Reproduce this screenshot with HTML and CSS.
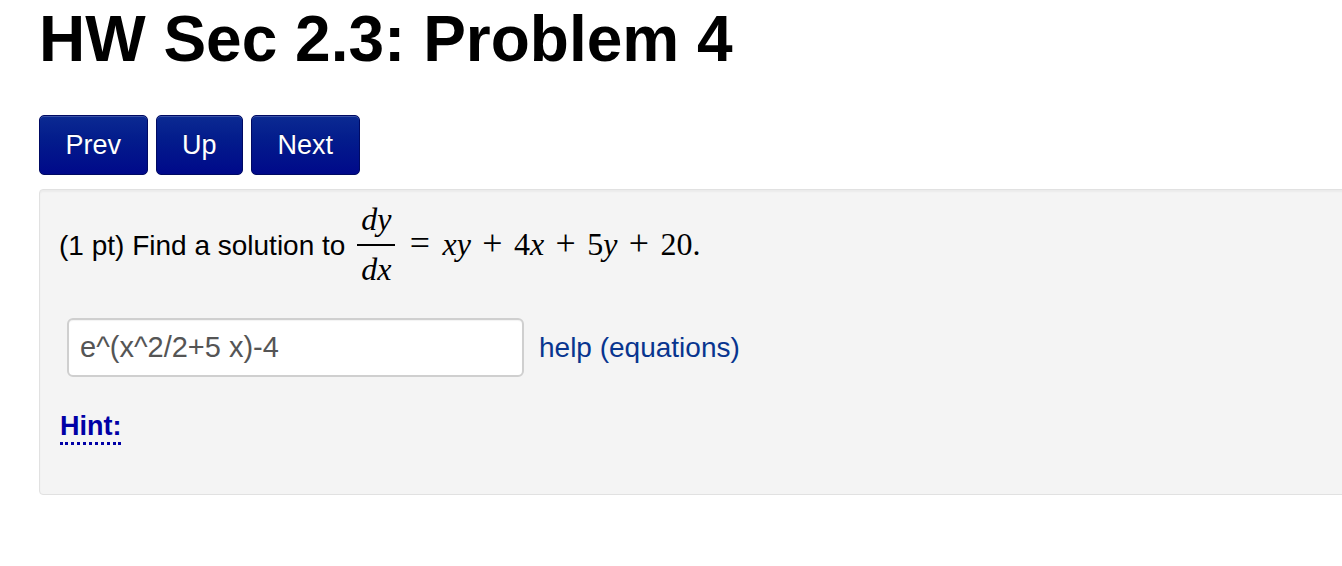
FILE: index.html
```html
<!DOCTYPE html>
<html lang="en">
<head>
<meta charset="utf-8">
<title>HW Sec 2.3: Problem 4</title>
<link rel="stylesheet" href="styles.css">
</head>
<body>
<div class="page">
  <h1 class="title">HW Sec 2.3: Problem 4</h1>
  <nav class="nav">
    <a class="btn" href="#">Prev</a>
    <a class="btn" href="#">Up</a>
    <a class="btn" href="#">Next</a>
  </nav>
  <div class="well">
    <p class="question">(1 pt) Find a solution to <span class="math"><span class="frac"><span class="num"><i>dy</i></span><span class="den"><i>dx</i></span></span><span class="rel">=</span><i>xy</i><span class="op">+</span>4<i>x</i><span class="op">+</span>5<i>y</i><span class="op">+</span>20.</span></p>
    <div class="answer-row">
      <input class="answer" type="text" value="e^(x^2/2+5 x)-4">
      <a class="help" href="#">help (equations)</a>
    </div>
    <div class="hint"><a class="hint-link" href="#">Hint:</a></div>
  </div>
</div>
</body>
</html>
```
FILE: styles.css
```css
html, body {
  margin: 0;
  padding: 0;
  background: #ffffff;
  overflow: hidden;
}

.page {
  padding-left: 39px;
  font-family: "Liberation Sans", Arial, Helvetica, sans-serif;
  color: #000;
}

.title {
  margin: 3px 0 0 0;
  font-size: 64px;
  line-height: 72px;
  font-weight: bold;
}

.nav {
  display: flex;
  gap: 8px;
  margin-top: 40px;
}

.btn {
  display: flex;
  align-items: center;
  height: 58px;
  padding: 0 25.5px;
  border: 1px solid #000a63;
  border-radius: 5px;
  background: linear-gradient(to bottom, #0b2a92 0%, #031c8c 40%, #00098a 100%);
  color: #ffffff;
  font-size: 27px;
  text-decoration: none;
  text-shadow: 0 -1px 0 rgba(0, 0, 0, 0.25);
  box-shadow: inset 0 1px 0 rgba(255, 255, 255, 0.2);
}

.well {
  box-sizing: border-box;
  width: 1400px;
  height: 306px;
  margin-top: 14px;
  padding: 13px 20px 19px;
  background: #f4f4f4;
  border: 1px solid #e1e1e1;
  border-radius: 4px;
  box-shadow: inset 0 2px 2px rgba(0, 0, 0, 0.04);
}

.question {
  margin: 0 0 0 -1px;
  font-size: 28px;
  line-height: 32px;
}

.math {
  font-family: "Liberation Serif", "Times New Roman", serif;
  font-size: 32px;
  margin-left: 4px;
}

.math i {
  font-style: italic;
}

.frac {
  display: inline-flex;
  flex-direction: column;
  align-items: center;
  vertical-align: 25px;
  margin-right: 12px;
}

.num {
  line-height: 32px;
  padding: 0 4px 9px;
  border-bottom: 2px solid #000;
}

.den {
  line-height: 32px;
  padding-top: 7px;
}

.rel {
  display: inline-block;
  width: 0.7em;
  font-size: 1.12em;
  line-height: 1;
  text-align: center;
  margin-right: 10px;
}

.op {
  display: inline-block;
  width: 0.7em;
  font-size: 1.12em;
  line-height: 1;
  text-align: center;
  margin: 0 9px;
}

.answer-row {
  display: flex;
  align-items: center;
  gap: 15px;
  margin: 33px 0 0 7px;
}

.answer {
  box-sizing: border-box;
  width: 457px;
  height: 59px;
  margin: 0;
  padding: 0 11px;
  border: 2px solid #cfcfcf;
  border-radius: 6px;
  background: #ffffff;
  color: #555555;
  font-family: "Liberation Sans", Arial, Helvetica, sans-serif;
  font-size: 29px;
  box-shadow: inset 0 1px 1px rgba(0, 0, 0, 0.05);
}

.help {
  color: #08358f;
  font-size: 28px;
  text-decoration: none;
}

.hint {
  margin-top: 33px;
  font-size: 27px;
  line-height: 32px;
}

.hint-link {
  color: #0000a6;
  font-weight: bold;
  text-decoration: none;
  border-bottom: 3px dotted #0000a6;
  padding-bottom: 1px;
}
```
